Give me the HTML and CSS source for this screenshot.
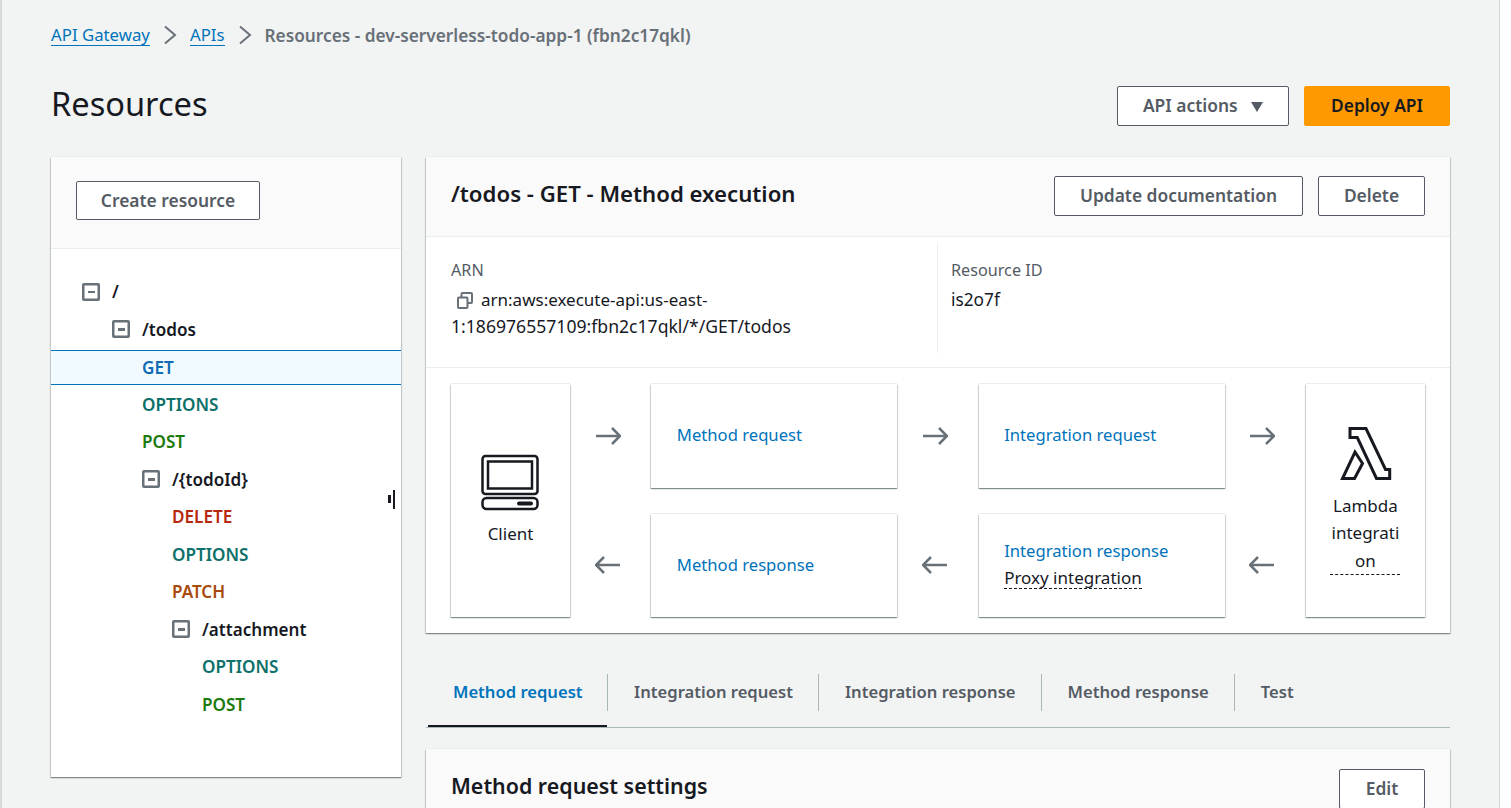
FILE: index.html
```html
<!DOCTYPE html>
<html lang="en">
<head>
    <meta charset="UTF-8">
    <meta name="viewport" content="width=device-width, initial-scale=1.0">
    <title>Resources</title>
    <link rel="stylesheet" href="styles.css">
</head>
<body>
<div class="page">
    <nav class="breadcrumbs">
        <a href="#">API Gateway</a>
        <svg class="crumb-arrow" viewBox="0 0 16 20"><path d="M3 1.5l10 8.500-10 8.500"/></svg>
        <a href="#">APIs</a>
        <svg class="crumb-arrow" viewBox="0 0 16 20"><path d="M3 1.5l10 8.500-10 8.500"/></svg>
        <span>Resources - dev-serverless-todo-app-1 (fbn2c17qkl)</span>
    </nav>

    <div class="page-head">
        <h1>Resources</h1>
        <div class="page-actions">
            <button class="btn btn-actions">API actions <span class="caret"></span></button>
            <button class="btn btn-primary">Deploy API</button>
        </div>
    </div>

    <div class="layout">
        <aside class="tree-panel">
            <div class="tree-head">
                <button class="btn btn-create">Create resource</button>
            </div>
            <ul class="tree">
                <li class="row lvl-0 path"><span class="minus"></span>/</li>
                <li class="row lvl-1 path"><span class="minus"></span>/todos</li>
                <li class="row lvl-2 m-get selected">GET</li>
                <li class="row lvl-2 m-options">OPTIONS</li>
                <li class="row lvl-2 m-post">POST</li>
                <li class="row lvl-2 path"><span class="minus"></span>/{todoId}</li>
                <li class="row lvl-3 m-delete">DELETE</li>
                <li class="row lvl-3 m-options">OPTIONS</li>
                <li class="row lvl-3 m-patch">PATCH</li>
                <li class="row lvl-3 path"><span class="minus"></span>/attachment</li>
                <li class="row lvl-4 m-options">OPTIONS</li>
                <li class="row lvl-4 m-post">POST</li>
            </ul>
            <div class="resize-handle"></div>
        </aside>

        <main class="main-col">
            <section class="card">
                <div class="card-head">
                    <h2 class="exec-title">/todos - GET - Method execution</h2>
                    <div class="card-actions">
                        <button class="btn btn-doc">Update documentation</button>
                        <button class="btn btn-delete">Delete</button>
                    </div>
                </div>
                <div class="details">
                    <div class="detail detail-arn">
                        <div class="detail-label">ARN</div>
                        <div class="detail-value">
                            <svg class="copy-icon" viewBox="0 0 17 17"><path d="M2 6.500a1 1 0 0 1 1-1h7.500a1 1 0 0 1 1 1V15a1 1 0 0 1-1 1H3a1 1 0 0 1-1-1zM5.500 5.500V2a1 1 0 0 1 1-1H15a1 1 0 0 1 1 1v8a1 1 0 0 1-1 1h-3.500"/></svg><span class="arn-head">arn:aws:execute-api:us-east-</span><span class="arn-tail">1:186976557109:fbn2c17qkl/*/GET/todos</span>
                        </div>
                    </div>
                    <div class="detail detail-id">
                        <div class="detail-label">Resource ID</div>
                        <div class="detail-value">is2o7f</div>
                    </div>
                </div>
                <div class="flow">
                    <div class="box box-end box-client">
                        <svg class="client-icon" viewBox="0 0 58 58"><rect x="1.5" y="2" width="55" height="38" rx="3"/><rect x="7" y="7.500" width="44" height="27"/><rect x="1.5" y="44" width="55" height="11" rx="4"/><path class="client-bar" d="M38 49.500h12"/></svg>
                        <div class="box-label">Client</div>
                    </div>
                    <div class="arrows">
                        <svg class="arrow" viewBox="0 0 26 20"><path d="M1 10h24M17 2l8 8-8 8"/></svg>
                        <svg class="arrow" viewBox="0 0 26 20"><path d="M25 10H1M9 2l-8 8 8 8"/></svg>
                    </div>
                    <div class="box-col">
                        <div class="box box-wide"><a href="#">Method request</a></div>
                        <div class="box box-wide"><a href="#">Method response</a></div>
                    </div>
                    <div class="arrows">
                        <svg class="arrow" viewBox="0 0 26 20"><path d="M1 10h24M17 2l8 8-8 8"/></svg>
                        <svg class="arrow" viewBox="0 0 26 20"><path d="M25 10H1M9 2l-8 8 8 8"/></svg>
                    </div>
                    <div class="box-col">
                        <div class="box box-wide"><a href="#">Integration request</a></div>
                        <div class="box box-wide box-proxy">
                            <a href="#">Integration response</a>
                            <span class="dashed proxy">Proxy integration</span>
                        </div>
                    </div>
                    <div class="arrows">
                        <svg class="arrow" viewBox="0 0 26 20"><path d="M1 10h24M17 2l8 8-8 8"/></svg>
                        <svg class="arrow" viewBox="0 0 26 20"><path d="M25 10H1M9 2l-8 8 8 8"/></svg>
                    </div>
                    <div class="box box-end box-lambda">
                        <svg class="lambda-icon" viewBox="0 0 54 56"><path d="M12 3.500H28L47.500 44.500H51.700V53.500H38.500L19.300 12.500H12zM17 27L24.500 38.500 16.500 53.500H4.500z"/></svg>
                        <div class="box-label"><span class="dashed lambda-label">Lambda integrati<br>on</span></div>
                    </div>
                </div>
            </section>

            <div class="tabs">
                <a class="tab active" href="#">Method request</a>
                <a class="tab" href="#">Integration request</a>
                <a class="tab" href="#">Integration response</a>
                <a class="tab" href="#">Method response</a>
                <a class="tab" href="#">Test</a>
            </div>

            <section class="card settings">
                <div class="card-head">
                    <h2>Method request settings</h2>
                    <button class="btn btn-edit">Edit</button>
                </div>
            </section>
        </main>
    </div>
</div>
</body>
</html>
```

FILE: styles.css
```css
* {
    box-sizing: border-box;
}

html, body {
    margin: 0;
    height: 100%;
    overflow: hidden;
}

body {
    font-family: "Noto Sans", "Open Sans", sans-serif;
    font-size: 17px;
    color: #16191f;
    background-color: #fff;
}

.page {
    width: 1500px;
    height: 808px;
    overflow: hidden;
    background-color: #f2f3f3;
    border-left: 2px solid #d5dbdb;
    border-right: 1px solid #cfd4d4;
    padding: 0 49px;
}

a {
    color: #0073bb;
    text-decoration: none;
}

.breadcrumbs {
    display: flex;
    align-items: center;
    height: 30px;
    margin-top: 20px;
    color: #687078;
    font-weight: 600;
    font-size: 17.25px;
}

.breadcrumbs a {
    font-size: 16.8px;
    font-weight: 400;
    border-bottom: 1px solid #0073bb;
    line-height: 20px;
}

.crumb-arrow {
    flex: none;
    width: 16px;
    height: 20px;
    margin: 0 12px;
    fill: none;
    stroke: #687078;
    stroke-width: 2;
}

.page-head {
    display: flex;
    justify-content: space-between;
    align-items: center;
    margin-top: 23px;
    height: 66px;
}

h1 {
    margin: 0 0 6px;
    font-size: 32.6px;
    font-weight: 400;
}

.page-actions, .card-actions {
    display: flex;
    gap: 15px;
}

.btn {
    height: 40px;
    padding: 0 0 2px;
    font-family: inherit;
    font-size: 17.4px;
    font-weight: 600;
    color: #545b64;
    background-color: #fff;
    border: 1px solid #545b64;
    border-radius: 2px;
}

.btn-actions {
    width: 172px;
}

.caret {
    display: inline-block;
    margin-left: 9px;
    border-left: 6.5px solid transparent;
    border-right: 6.5px solid transparent;
    border-top: 10px solid #545b64;
}

.btn-primary {
    width: 146px;
    color: #16191f;
    background-color: #ff9900;
    border-color: #ff9900;
}

.layout {
    display: flex;
    gap: 25px;
    margin-top: 18px;
}

.tree-panel, .card, .box {
    background-color: #fff;
    box-shadow: 0 1px 1px 0 rgba(0, 28, 36, .3), 1px 1px 1px 0 rgba(0, 28, 36, .15), -1px 1px 1px 0 rgba(0, 28, 36, .15), 0 -1px 0 0 #eaeded;
}

.tree-panel {
    position: relative;
    flex: none;
    width: 350px;
    height: 620px;
}

.tree-head {
    height: 92px;
    padding: 24px 25px;
    background-color: #fafafa;
    border-bottom: 1px solid #eaeded;
}

.btn-create {
    width: 184px;
    height: 39px;
}

.tree {
    list-style: none;
    margin: 24px 0 0;
    padding: 0;
    font-size: 17.1px;
    font-weight: 600;
}

.row {
    display: flex;
    align-items: center;
    height: 37.5px;
}

.lvl-0 { padding-left: 31px; }
.lvl-1 { padding-left: 61px; }
.lvl-2 { padding-left: 91px; }
.lvl-3 { padding-left: 121px; }
.lvl-4 { padding-left: 151px; }

.minus {
    position: relative;
    flex: none;
    width: 18px;
    height: 18px;
    margin-right: 12px;
    border-radius: 2px;
    box-shadow: inset 0 0 0 2.5px #687078;
}

.minus::after {
    content: "";
    position: absolute;
    left: 5.5px;
    top: 7.75px;
    width: 7px;
    height: 2.5px;
    background-color: #687078;
}

.selected {
    height: 35px;
    margin: 2px 0 0.5px;
    background-color: #f1faff;
    border-top: 1px solid #0073bb;
    border-bottom: 1px solid #0073bb;
}

.m-get { color: #0f6ab4; }
.m-options { color: #0d7069; }
.m-post { color: #1d7a0c; }
.m-delete { color: #b7290f; }
.m-patch { color: #a84a0c; }

.resize-handle {
    position: absolute;
    right: 6px;
    top: 333px;
    width: 7px;
    height: 19px;
    border-right: 2px solid #16191f;
}

.resize-handle::before {
    content: "";
    position: absolute;
    left: 0;
    top: 5px;
    width: 2.5px;
    height: 8px;
    background-color: #16191f;
}

.main-col {
    flex: none;
    width: 1024px;
}

.card-head {
    display: flex;
    justify-content: space-between;
    align-items: center;
    height: 80px;
    padding: 0 25px 2px;
    background-color: #fafafa;
    border-bottom: 1px solid #eaeded;
}

h2 {
    margin: 0 0 6px;
    font-size: 21.4px;
    font-weight: 600;
}

.exec-title {
    margin-bottom: 4px;
    font-size: 22.2px;
}

.btn-doc {
    width: 249px;
}

.btn-delete {
    width: 107px;
}

.details {
    display: flex;
    height: 131px;
    padding: 6px 25px 0;
    border-bottom: 1px solid #eaeded;
}

.detail-label {
    color: #545b64;
    font-size: 16.2px;
    line-height: 27px;
    margin-top: 14px;
    margin-bottom: 2px;
}

.detail-value {
    font-size: 17.3px;
    line-height: 27px;
}

.detail-arn {
    width: 487px;
    height: 110px;
    border-right: 1px solid #eaeded;
}

.detail-id {
    padding-left: 13px;
}

.arn-head {
    font-size: 17px;
}

.arn-tail {
    display: block;
    font-size: 17.6px;
}

.copy-icon {
    width: 17px;
    height: 17px;
    margin: 0 8px 0 5px;
    vertical-align: -3px;
    fill: none;
    stroke: #687078;
    stroke-width: 2;
}

.flow {
    display: flex;
    height: 265px;
    padding: 16px 25px;
    justify-content: space-between;
}

.box-end {
    display: flex;
    flex-direction: column;
    align-items: center;
    justify-content: center;
    flex: none;
    width: 119px;
    text-align: center;
}

.client-icon {
    width: 58px;
    height: 58px;
    margin-right: 1px;
    fill: none;
    stroke: #16191f;
    stroke-width: 2.5;
}

.client-bar {
    stroke-width: 4;
    stroke-linecap: round;
}

.box-label {
    margin-top: 8px;
    line-height: 27.5px;
}

.lambda-icon {
    width: 54px;
    height: 56px;
    fill: none;
    stroke: #16191f;
    stroke-width: 3;
}

.box-lambda {
    padding-bottom: 1px;
}

.box-lambda .box-label {
    margin-top: 11px;
}

.box-col {
    display: flex;
    flex: none;
    flex-direction: column;
    gap: 26px;
}

.box-wide {
    display: flex;
    flex-direction: column;
    justify-content: center;
    align-items: flex-start;
    width: 246px;
    height: 104px;
    padding: 0 25.5px 2px;
    font-size: 16.65px;
    line-height: 27px;
}

.box-proxy {
    padding-bottom: 4px;
}

.arrows {
    display: flex;
    flex-direction: column;
    justify-content: space-between;
    align-items: center;
    flex: none;
    width: 80px;
    padding: 42px 6px 42px 0;
}

.arrow {
    width: 26px;
    height: 20px;
    fill: none;
    stroke: #687078;
    stroke-width: 2.5;
}

.dashed {
    border-bottom: 1px dashed #16191f;
}

.proxy {
    margin-top: 4px;
    font-size: 17px;
    line-height: 20px;
}

.lambda-label {
    display: block;
    width: 70px;
}

.tabs {
    display: flex;
    height: 54px;
    margin-top: 41px;
    padding-left: 2px;
    border-bottom: 1px solid #aab7b8;
}

.tab {
    position: relative;
    display: flex;
    align-items: center;
    height: 100%;
    padding: 0 25px 18px 27px;
    font-size: 16.6px;
    font-weight: 600;
    color: #545b64;
}

.tab + .tab::before {
    content: "";
    position: absolute;
    left: 0;
    top: 0;
    height: 37px;
    width: 1px;
    background-color: #aab7b8;
}

.tab.active {
    padding-left: 25px;
    padding-right: 24.5px;
    padding-bottom: 16px;
    color: #0073bb;
    border-bottom: 2px solid #16191f;
}

.settings {
    margin-top: 21px;
}

.settings .card-head {
    padding-bottom: 0;
}

.btn-edit {
    width: 86px;
}
```
